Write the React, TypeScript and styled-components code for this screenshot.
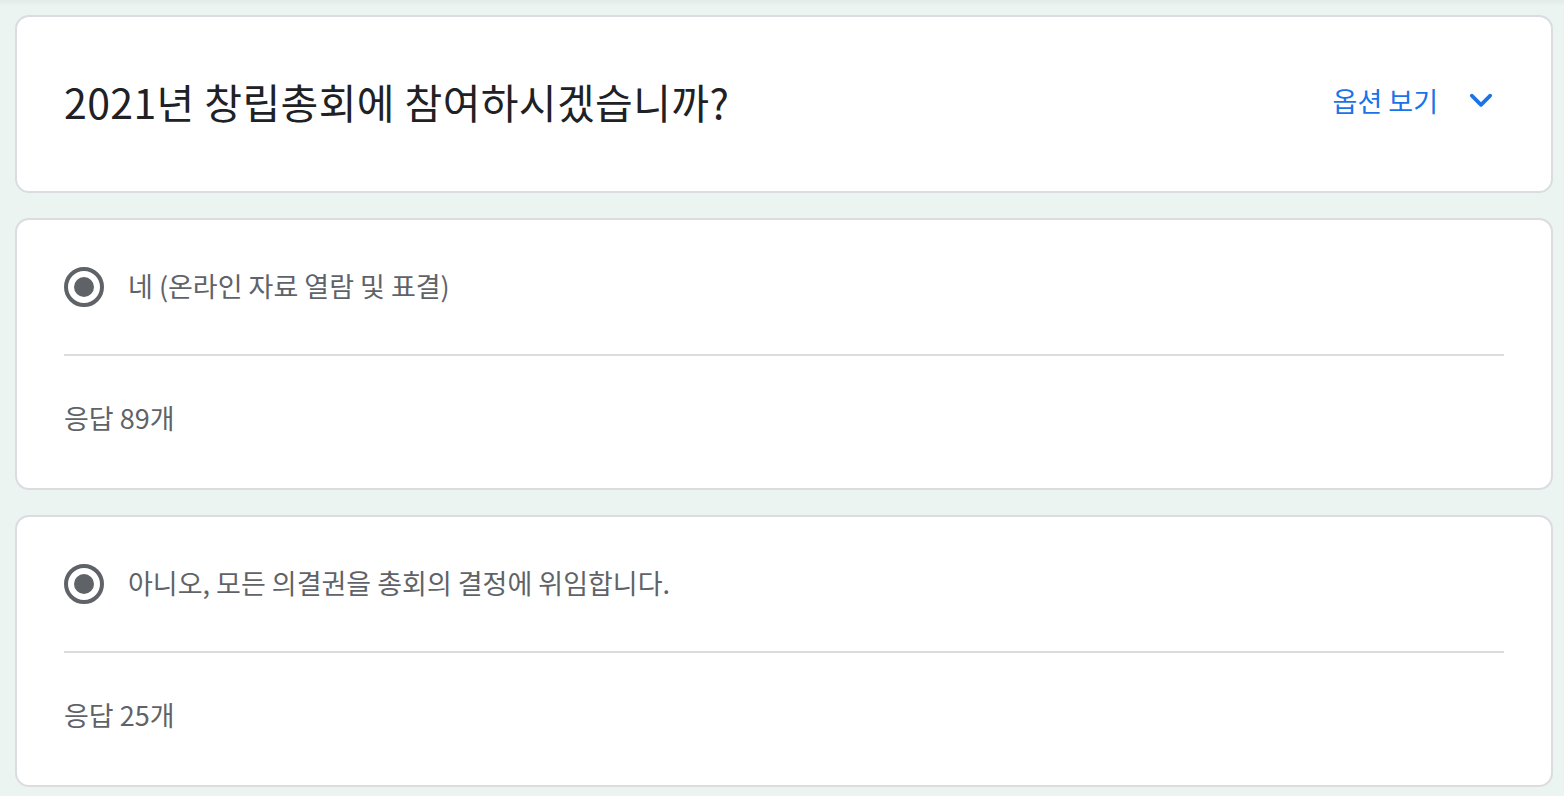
import React from 'react';
import styled, { createGlobalStyle } from 'styled-components';

const GlobalStyle = createGlobalStyle`
  html, body {
    margin: 0;
    padding: 0;
    background: #ebf4f1;
  }
  body {
    font-family: "Noto Sans CJK KR", "Noto Sans", Roboto, sans-serif;
    -webkit-font-smoothing: antialiased;
  }
`;

const Page = styled.div`
  display: flex;
  flex-direction: column;
  gap: 25px;
  padding: 15px 11px 10px 15px;
  background: linear-gradient(#e3ebe8 0, #ebf4f1 6px);
`;

const Card = styled.section`
  background: #fff;
  border: 2px solid #dadce0;
  border-radius: 14px;
  padding: 47px;
`;

const HeaderRow = styled.div`
  display: flex;
  align-items: center;
  justify-content: space-between;
  height: 80px;
`;

const Title = styled.h1`
  margin: -6px 0 0;
  font-size: 41px;
  font-weight: 400;
  color: #202124;
  letter-spacing: 0.4px;
`;

const OptionsToggle = styled.button`
  display: flex;
  align-items: center;
  gap: 30px;
  margin: -8px 10px 0 0;
  padding: 0;
  border: 0;
  background: none;
  color: #1a73e8;
  font-family: inherit;
  font-size: 27px;
  cursor: pointer;

  svg {
    width: 26px;
    height: 26px;
  }
`;

const OptionRow = styled.div`
  display: flex;
  align-items: center;
  gap: 24px;
  height: 40px;
`;

const OptionLabel = styled.span`
  margin-top: -4px;
  font-size: 27px;
  color: #5f6368;
`;

const Divider = styled.hr`
  margin: 47px 0 0;
  border: 0;
  border-top: 2px solid #dadce0;
`;

const ResponseCount = styled.div`
  padding-top: 38px;
  line-height: 47px;
  font-size: 27px;
  color: #5f6368;
`;

const Radio = () => (
  <svg width="40" height="40" viewBox="0 0 40 40">
    <circle cx="20" cy="20" r="18" fill="none" stroke="#5f6368" strokeWidth="4" />
    <circle cx="20" cy="20" r="10" fill="#5f6368" />
  </svg>
);

const Chevron = () => (
  <svg viewBox="0 0 24 24" fill="none" stroke="currentColor" strokeWidth="3.4" strokeLinecap="round" strokeLinejoin="round">
    <polyline points="3.5 8 12 16.5 20.5 8" />
  </svg>
);

const options = [
  { label: '네 (온라인 자료 열람 및 표결)', count: 89 },
  { label: '아니오, 모든 의결권을 총회의 결정에 위임합니다.', count: 25 },
];

export default function App() {
  return (
    <>
      <GlobalStyle />
      <Page>
        <Card>
          <HeaderRow>
            <Title>2021년 창립총회에 참여하시겠습니까?</Title>
            <OptionsToggle>
              옵션 보기
              <Chevron />
            </OptionsToggle>
          </HeaderRow>
        </Card>
        {options.map((o) => (
          <Card key={o.count}>
            <OptionRow>
              <Radio />
              <OptionLabel>{o.label}</OptionLabel>
            </OptionRow>
            <Divider />
            <ResponseCount>응답 {o.count}개</ResponseCount>
          </Card>
        ))}
      </Page>
    </>
  );
}
